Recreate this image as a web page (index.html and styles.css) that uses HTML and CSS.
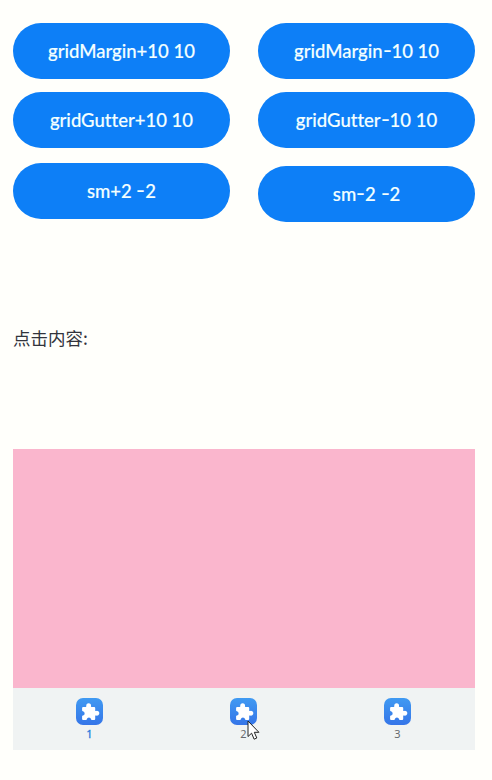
FILE: index.html
```html
<!DOCTYPE html>
<html lang="zh-CN">
<head>
<meta charset="utf-8">
<title>GridRow</title>
<link rel="stylesheet" href="styles.css">
</head>
<body>
<svg width="0" height="0" class="defs" aria-hidden="true">
  <defs>
    <linearGradient id="tile" x1="0" y1="0" x2="0" y2="1"><stop offset="0" stop-color="#409af2"/><stop offset="1" stop-color="#3575e8"/></linearGradient>
    <symbol id="puzzle" viewBox="0 0 27 27">
      <rect width="27" height="27" rx="7" fill="url(#tile)"/>
      <path fill="#fff" transform="translate(-.4 .8)" d="M7.500 8.200h2.700c.5 0 .6-.4.5-.9a2.400 2.400 0 1 1 4.700 0c-.1.5 0 .9.5.9h2.700q1 0 1 1v2.500c0 .5.4.6.9.5a2.400 2.400 0 1 1 0 4.500c-.5-.1-.9 0-.9.5v3q0 1-1 1h-2.400c-.5 0-.6-.4-.7-.8a2.200 2.200 0 0 0-4.300 0c-.1.4-.2.8-.7.8H7.500q-1 0-1-1v-2.700c0-.5.4-.6.8-.7a2.200 2.200 0 0 0 0-4.300c-.4-.1-.8-.2-.8-.7V9.200q0-1 1-1z"/>
    </symbol>
  </defs>
</svg>
<main class="page">
  <div class="buttons">
    <div class="column">
      <button class="btn">gridMargin+10 10</button>
      <button class="btn gutter">gridGutter+10 10</button>
      <button class="btn small">sm+2 <span class="dash">-</span>2</button>
    </div>
    <div class="column right">
      <button class="btn">gridMargin<span class="dash">-</span>10 10</button>
      <button class="btn gutter">gridGutter<span class="dash">-</span>10 10</button>
      <button class="btn small">sm<span class="dash">-</span>2 <span class="dash">-</span>2</button>
    </div>
  </div>
  <p class="clicked">点击内容:</p>
  <section class="tabs">
    <div class="content"></div>
    <nav class="bar">
      <div class="tab active"><svg class="icon"><use href="#puzzle"/></svg><span>1</span></div>
      <div class="tab"><svg class="icon"><use href="#puzzle"/></svg><span>2</span>
        <svg class="cursor" viewBox="0 0 13 21"><path d="M1 1v15.500l3.600-3.300 2.500 6 2.700-1.200-2.500-5.700h4.600z" fill="#fff" stroke="#222" stroke-width="1"/></svg>
      </div>
      <div class="tab"><svg class="icon"><use href="#puzzle"/></svg><span>3</span></div>
    </nav>
  </section>
</main>
</body>
</html>
```
FILE: styles.css
```css
body {
  margin: 0;
  background: #fffffb;
  font-family: "Noto Sans", "Noto Sans CJK SC", sans-serif;
}
.defs { display: block; }
.page {
  width: 462px;
  padding: 23px 0 0 13px;
}
.buttons {
  display: grid;
  grid-template-columns: 217px 217px;
  justify-content: space-between;
  height: 199px;
}
.column {
  display: flex;
  flex-direction: column;
}
.btn {
  box-sizing: border-box;
  width: 217px;
  height: 56px;
  margin: 0 0 13px;
  padding: 0;
  border: 0;
  border-radius: 28px;
  background: #0d7ff7;
  color: #f4ffff;
  font: 500 18.5px/56px Lato, sans-serif;
  font-variant-ligatures: none;
  -webkit-text-stroke: 0.15px #f4ffff;
  white-space: pre;
}
.dash {
  display: inline-block;
  line-height: 1;
  transform: translateY(-1px) scaleX(1.3);
  margin: 0 1px;
}
.gutter { margin-bottom: 15px; }
.right .gutter { margin-bottom: 18px; }
.clicked {
  margin: 103px 0 0;
  height: 26px;
  font-family: "Noto Sans CJK SC", sans-serif;
  font-size: 17.5px;
  line-height: 25px;
  color: #32343c;
}
.tabs { margin-top: 98px; }
.content {
  height: 239px;
  background: #fab6cd;
}
.bar {
  display: grid;
  grid-template-columns: repeat(3, 1fr);
  height: 62px;
  background: #f0f3f3;
}
.tab {
  position: relative;
  display: flex;
  flex-direction: column;
  align-items: center;
  padding: 10px 1px 0 0;
  font-size: 11px;
  line-height: 14px;
  color: #666a6e;
}
.active { color: #1f79dc; }
.active span { -webkit-text-stroke: 0.3px #1f79dc; }
.icon {
  width: 27px;
  height: 27px;
  margin-bottom: 2px;
}
.cursor {
  position: absolute;
  left: 80px;
  top: 32px;
  width: 13px;
  height: 21px;
}
```
